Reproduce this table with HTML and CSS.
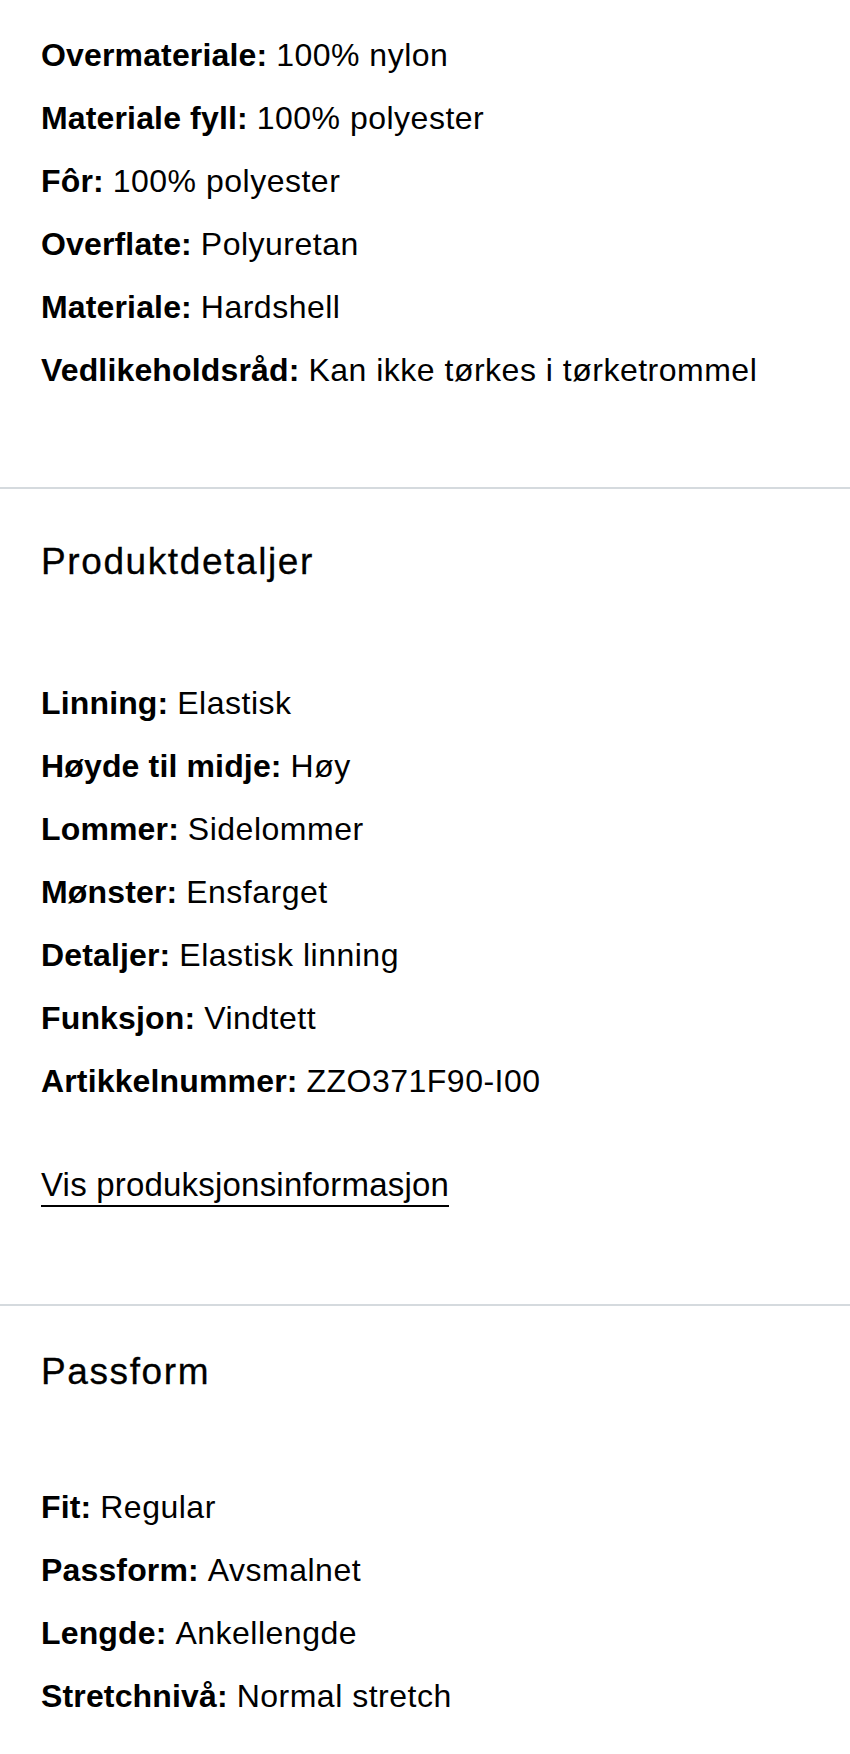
FILE: index.html
```html
<!DOCTYPE html>
<html lang="no">
<head>
<meta charset="utf-8">
<title>Produktinformasjon</title>
<link rel="stylesheet" href="styles.css">
</head>
<body>
<main class="details">
  <section class="section section--first">
    <ul class="attrs">
      <li class="attr"><b class="attr__key">Overmateriale:</b> <span class="attr__val">100% nylon</span></li>
      <li class="attr"><b class="attr__key">Materiale fyll:</b> <span class="attr__val">100% polyester</span></li>
      <li class="attr"><b class="attr__key">Fôr:</b> <span class="attr__val">100% polyester</span></li>
      <li class="attr"><b class="attr__key">Overflate:</b> <span class="attr__val">Polyuretan</span></li>
      <li class="attr"><b class="attr__key">Materiale:</b> <span class="attr__val">Hardshell</span></li>
      <li class="attr"><b class="attr__key">Vedlikeholdsråd:</b> <span class="attr__val">Kan ikke tørkes i tørketrommel</span></li>
    </ul>
  </section>
  <section class="section section--details">
    <h2 class="section__title">Produktdetaljer</h2>
    <ul class="attrs">
      <li class="attr"><b class="attr__key">Linning:</b> <span class="attr__val">Elastisk</span></li>
      <li class="attr"><b class="attr__key">Høyde til midje:</b> <span class="attr__val">Høy</span></li>
      <li class="attr"><b class="attr__key">Lommer:</b> <span class="attr__val">Sidelommer</span></li>
      <li class="attr"><b class="attr__key">Mønster:</b> <span class="attr__val">Ensfarget</span></li>
      <li class="attr"><b class="attr__key">Detaljer:</b> <span class="attr__val">Elastisk linning</span></li>
      <li class="attr"><b class="attr__key">Funksjon:</b> <span class="attr__val">Vindtett</span></li>
      <li class="attr"><b class="attr__key">Artikkelnummer:</b> <span class="attr__val">ZZO371F90-I00</span></li>
    </ul>
    <a class="more-link" href="#">Vis produksjonsinformasjon</a>
  </section>
  <section class="section section--fit">
    <h2 class="section__title">Passform</h2>
    <ul class="attrs">
      <li class="attr"><b class="attr__key">Fit:</b> <span class="attr__val">Regular</span></li>
      <li class="attr"><b class="attr__key">Passform:</b> <span class="attr__val">Avsmalnet</span></li>
      <li class="attr"><b class="attr__key">Lengde:</b> <span class="attr__val">Ankellengde</span></li>
      <li class="attr"><b class="attr__key">Stretchnivå:</b> <span class="attr__val">Normal stretch</span></li>
    </ul>
  </section>
</main>
</body>
</html>
```

FILE: styles.css
```css
* {
  box-sizing: border-box;
}

html,
body {
  margin: 0;
  padding: 0;
  background: #ffffff;
}

body {
  font-family: "Liberation Sans", Arial, sans-serif;
  color: #000000;
  -webkit-font-smoothing: antialiased;
}

.details {
  display: flex;
  flex-direction: column;
}

.section {
  padding: 0 41px;
  display: flex;
  flex-direction: column;
  align-items: flex-start;
}

.section + .section {
  border-top: 2px solid #d5dade;
}

.section--first {
  padding-top: 24px;
  padding-bottom: 85px;
}

.section--details {
  padding-top: 53px;
  padding-bottom: 97px;
}

.section--fit {
  padding-top: 46px;
  padding-bottom: 30px;
}

.section__title {
  margin: 0;
  font-size: 37px;
  line-height: 40px;
  font-weight: 400;
  letter-spacing: 1.6px;
  -webkit-text-stroke: 0.3px #000000;
}

.section--details .attrs {
  margin-top: 90px;
}

.section--fit .attrs {
  margin-top: 84px;
}

.attrs {
  list-style: none;
  margin: 0;
  padding: 0;
  display: flex;
  flex-direction: column;
}

.attr {
  font-size: 32px;
  line-height: 63px;
  height: 63px;
  white-space: nowrap;
}

.attr__key {
  font-weight: 700;
  letter-spacing: 0.15px;
}

.attr__val {
  letter-spacing: 0.5px;
}

.more-link {
  display: inline-block;
  margin-top: 51px;
  font-size: 33px;
  line-height: 41px;
  letter-spacing: 0.2px;
  color: #000000;
  text-decoration: none;
  border-bottom: 2px solid #000000;
}
```
